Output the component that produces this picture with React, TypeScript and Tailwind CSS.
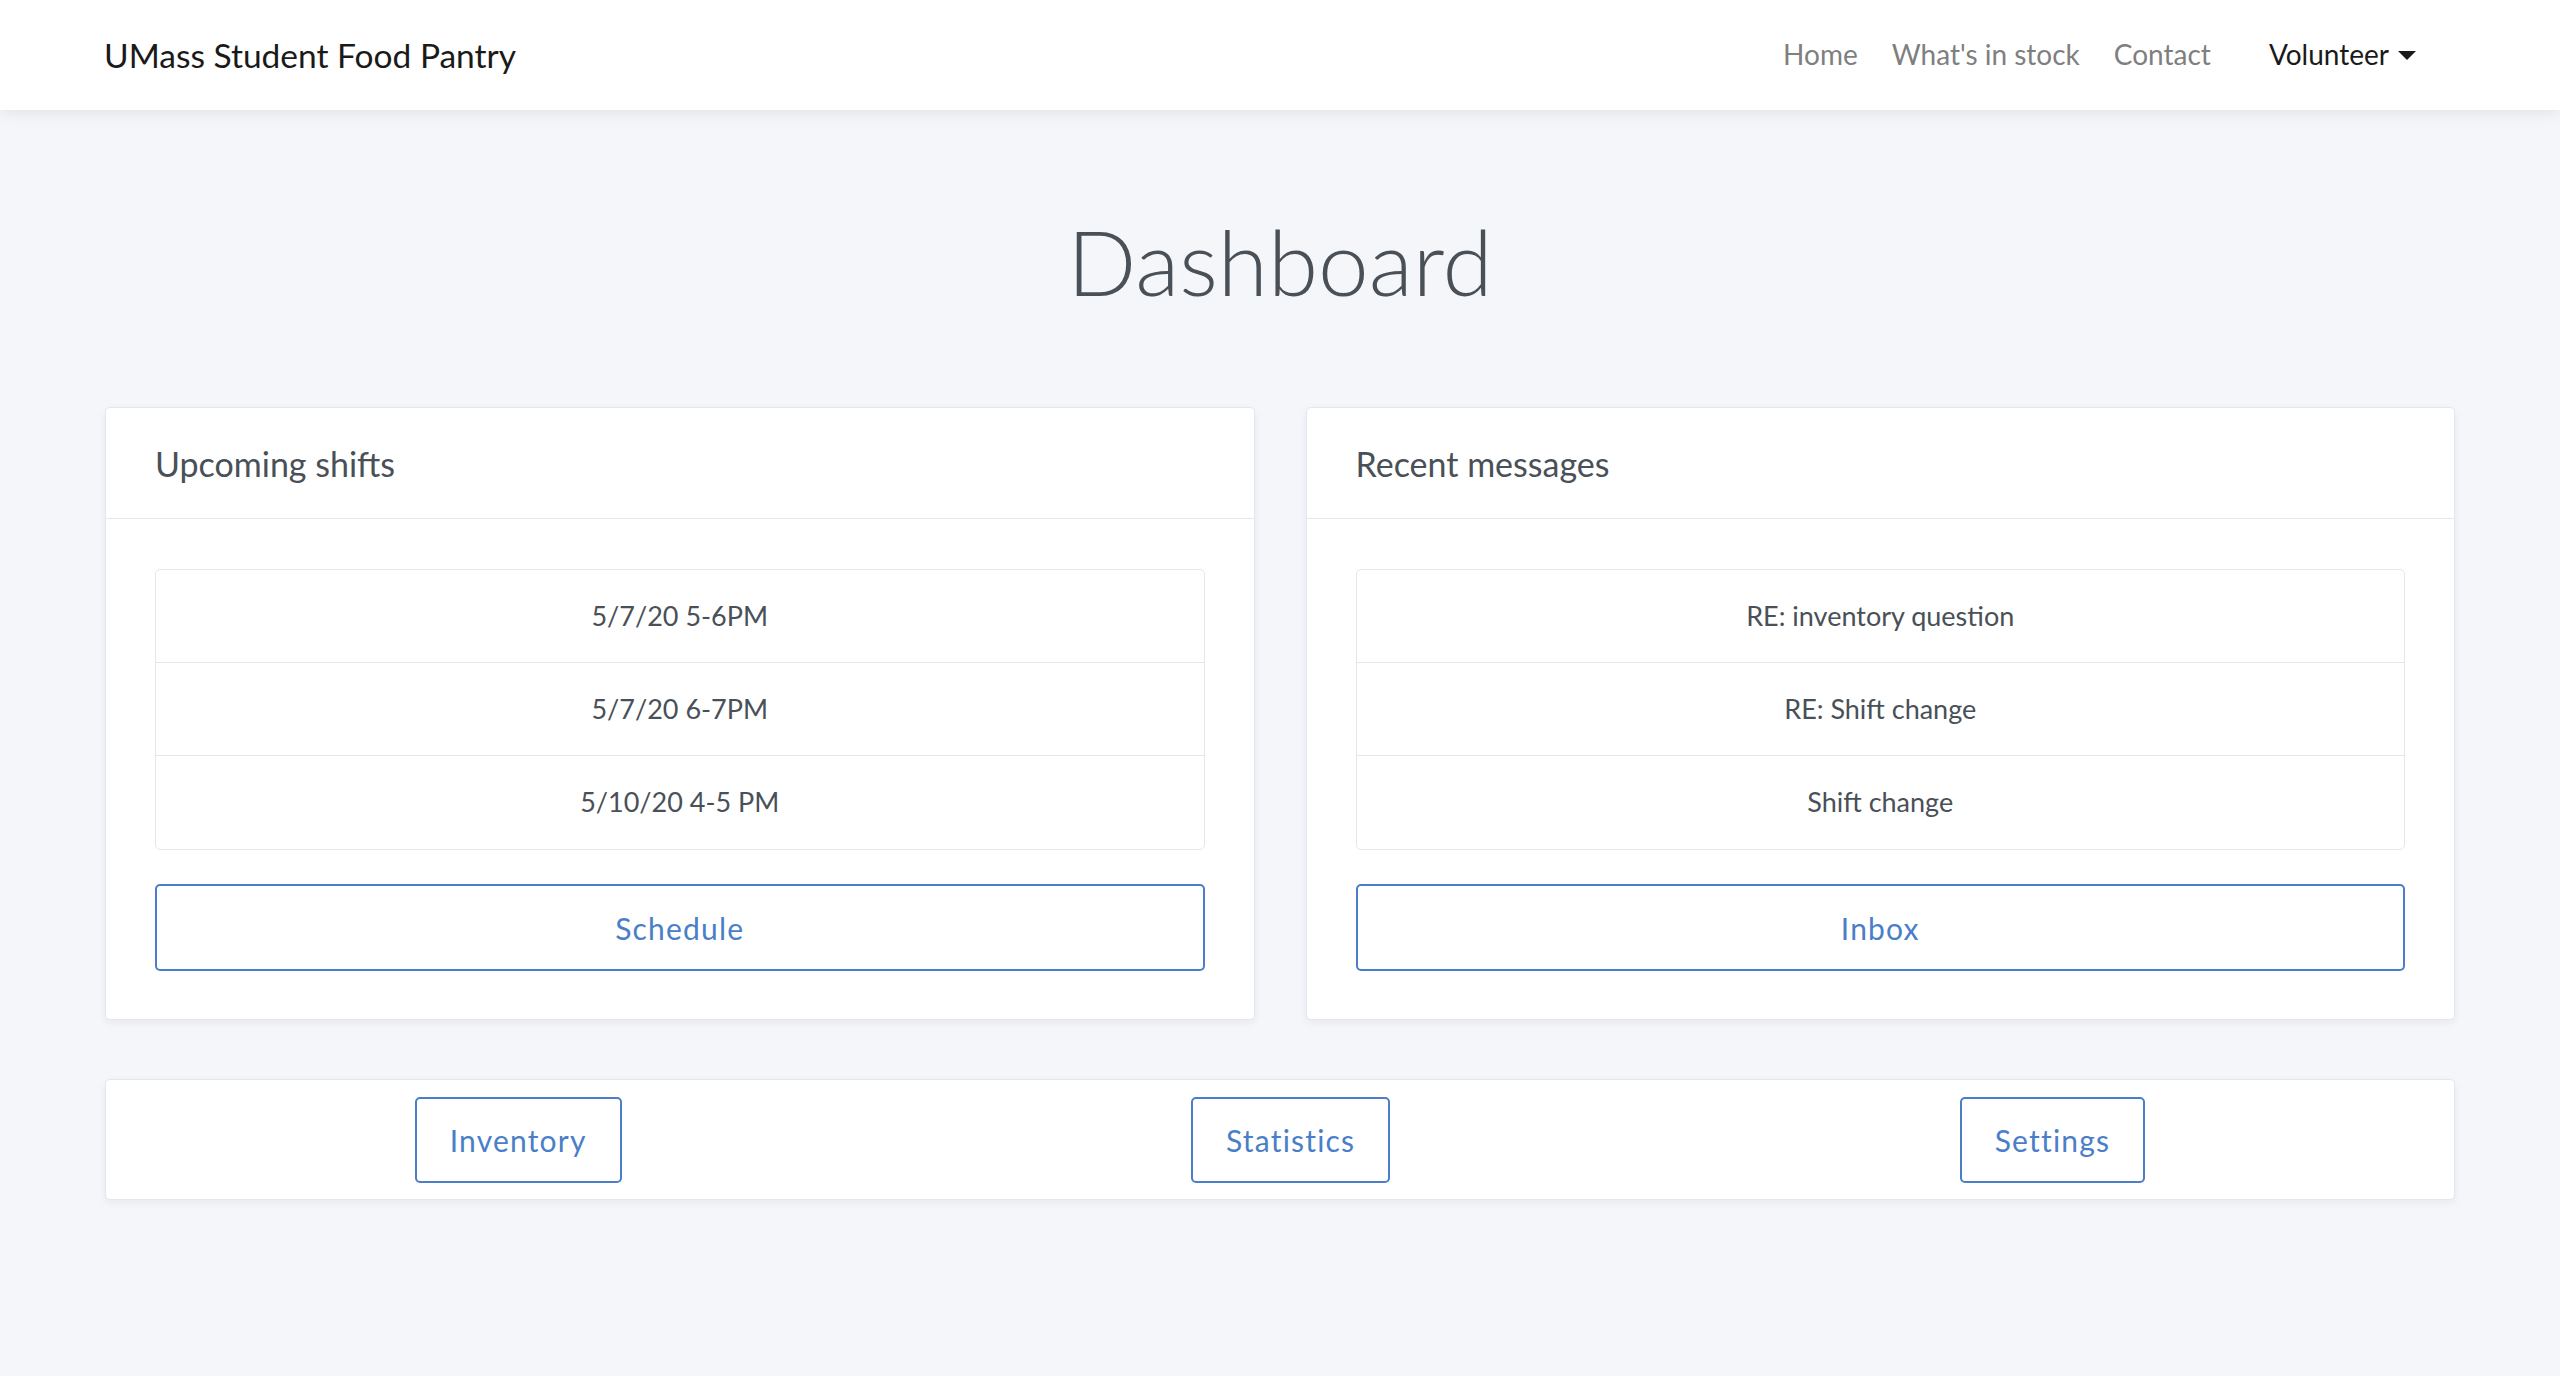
const shifts = ['5/7/20 5-6PM', '5/7/20 6-7PM', '5/10/20 4-5 PM'];
const messages = ['RE: inventory question', 'RE: Shift change', 'Shift change'];

function Panel({ title, items, action }: { title: string; items: string[]; action: string }) {
  return (
    <div className="bg-white border border-[#e3e7ec] rounded-[5px] shadow-[0_3px_8px_rgba(30,40,60,0.06)]">
      <div className="h-[111px] px-[49px] flex items-center border-b border-[#e3e7ec]">
        <h5 className="text-[34px] text-[#495057]">{title}</h5>
      </div>
      <div className="px-[49px] pt-[50px] pb-[48px]">
        <ul className="border border-[#e3e7ec] rounded-[5px]">
          {items.map((item, i) => (
            <li
              key={item}
              className={`h-[93px] flex items-center justify-center text-[27px] text-[#495057] ${
                i < items.length - 1 ? 'border-b border-[#e3e7ec]' : ''
              }`}
            >
              {item}
            </li>
          ))}
        </ul>
        <button className="mt-[34px] w-full h-[87px] pt-[2px] border-2 border-[#4a7ec8] rounded-[5px] text-[30px] tracking-[1.2px] text-[#4a7ec8] bg-white">
          {action}
        </button>
      </div>
    </div>
  );
}

export default function App() {
  return (
    <div className="min-h-screen bg-[#f5f6fa] font-['Lato','Open_Sans',sans-serif]">
      <nav className="h-[110px] bg-white shadow-[0_4px_14px_rgba(0,0,0,0.07)] flex items-center pl-[104px] pr-[144px]">
        <a className="text-[33.5px] text-[#1a1a1a]">UMass Student Food Pantry</a>
        <div className="ml-auto flex items-center text-[28px] -mt-[2px]">
          <a className="text-[#7f7f7f]">Home</a>
          <a className="ml-[34px] text-[#7f7f7f]">What's in stock</a>
          <a className="ml-[34px] text-[#7f7f7f]">Contact</a>
          <a className="ml-[58px] flex items-center text-[#1a1a1a]">
            Volunteer
            <span className="ml-[9px] mt-[3px] w-0 h-0 border-t-[9px] border-t-[#1a1a1a] border-x-[9px] border-x-transparent" />
          </a>
        </div>
      </nav>

      <main className="px-[105px]">
        <h1 className="mt-[104px] h-[94px] leading-[94px] text-center text-[91px] font-light text-[#495057]">
          Dashboard
        </h1>

        <div className="mt-[99px] grid grid-cols-2 gap-[51px]">
          <Panel title="Upcoming shifts" items={shifts} action="Schedule" />
          <Panel title="Recent messages" items={messages} action="Inbox" />
        </div>

        <div className="mt-[59px] h-[121px] px-[24px] flex items-center justify-around bg-white border border-[#e3e7ec] rounded-[5px] shadow-[0_3px_8px_rgba(30,40,60,0.06)]">
          {['Inventory', 'Statistics', 'Settings'].map((label) => (
            <button
              key={label}
              className="h-[86px] px-[33px] pt-[2px] border-2 border-[#4a7ec8] rounded-[5px] text-[30px] tracking-[1.2px] text-[#4a7ec8] bg-white"
            >
              {label}
            </button>
          ))}
        </div>
      </main>
    </div>
  );
}
